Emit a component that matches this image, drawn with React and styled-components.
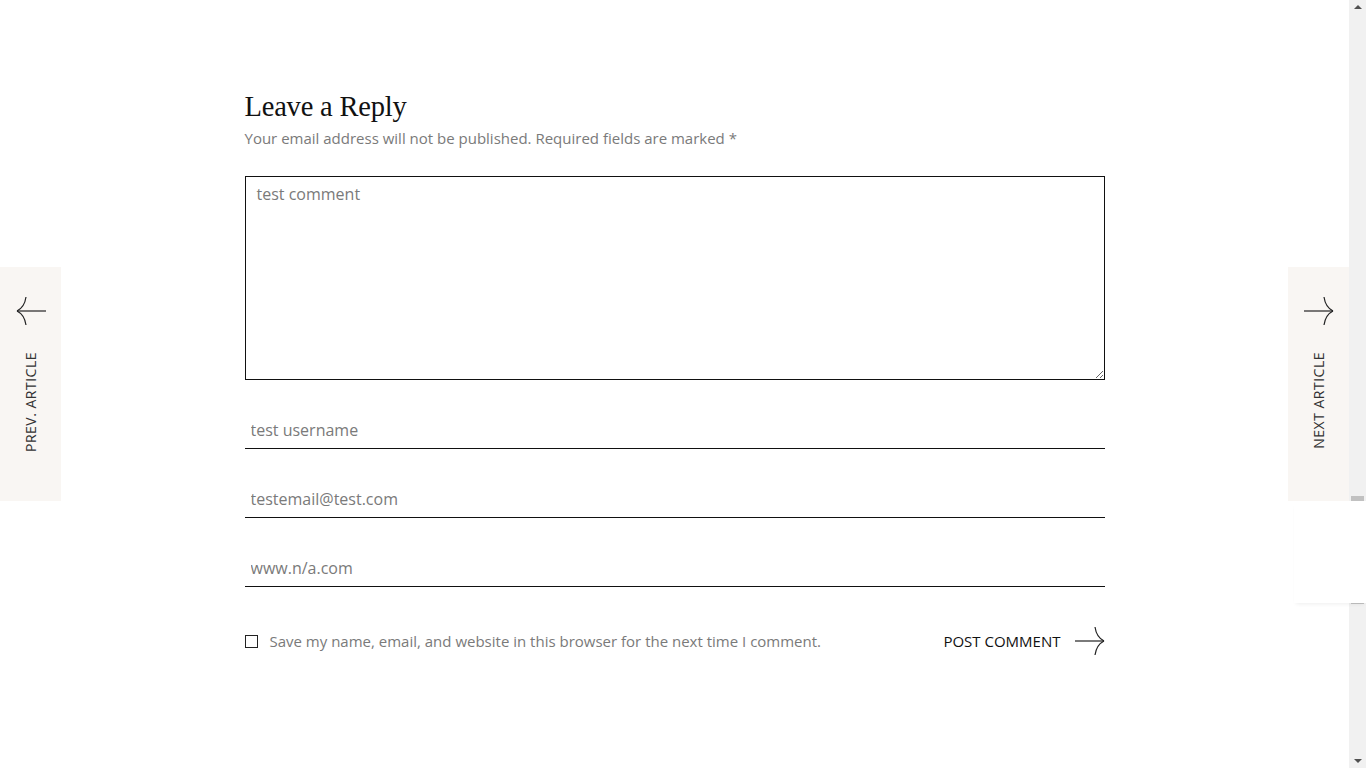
import React from "react"
import styled, { createGlobalStyle } from "styled-components"

const Global = createGlobalStyle`
  html, body { margin: 0; padding: 0; height: 100%; overflow: hidden; background: #fff; }
  #root { height: 100%; }
  * { box-sizing: border-box; }
`

const Shell = styled.div`
  display: flex;
  height: 768px;
  font-family: "Open Sans", "Liberation Sans", sans-serif;
`

const Page = styled.main`
  flex: 1;
  display: flex;
  justify-content: center;
  padding-top: 88px;
`

const Form = styled.form`
  width: 860px;
  display: flex;
  flex-direction: column;
`

const Heading = styled.h3`
  margin: 0;
  font-family: "Liberation Serif", "DejaVu Serif", serif;
  font-weight: 400;
  font-size: 28.5px;
  line-height: 38px;
  color: #111;
  letter-spacing: -0.2px;
`

const Notice = styled.p`
  margin: 0 0 26px;
  font-size: 15px;
  line-height: 24px;
  color: #7a7a7a;
`

const Comment = styled.textarea`
  width: 860px;
  height: 204px;
  border: 1px solid #111;
  padding: 5px 11px;
  font-family: inherit;
  font-size: 16px;
  line-height: 24px;
  color: #333;
  resize: vertical;
  outline: none;
  &::placeholder { color: #7a7a7a; }
`

const Field = styled.input`
  margin-top: 29px;
  height: 40px;
  border: 0;
  border-bottom: 1px solid #111;
  padding: 3px 6px 0;
  font-family: inherit;
  font-size: 16px;
  color: #333;
  outline: none;
  &::placeholder { color: #7a7a7a; }
`

const Footer = styled.div`
  margin-top: 39px;
  display: flex;
  align-items: center;
  justify-content: space-between;
`

const Consent = styled.label`
  display: flex;
  align-items: center;
  gap: 12px;
  font-size: 15px;
  color: #7a7a7a;
`

const Box = styled.span`
  width: 13px;
  height: 13px;
  border: 1.5px solid #222;
  display: inline-block;
`

const Submit = styled.button`
  display: flex;
  align-items: center;
  gap: 14px;
  border: 0;
  background: none;
  padding: 0;
  font-family: inherit;
  font-size: 15px;
  text-transform: uppercase;
  color: #111;
  cursor: pointer;
`

const SideNav = styled.a`
  position: fixed;
  top: 267px;
  ${p => (p.$side === "left" ? "left: 0;" : "right: 17px;")}
  width: 61px;
  height: 234px;
  background: #f9f6f3;
  display: flex;
  flex-direction: column;
  align-items: center;
  padding-top: 29px;
  gap: 26px;
  color: #333;
  text-decoration: none;
`

const SideLabel = styled.span`
  writing-mode: vertical-rl;
  transform: rotate(180deg);
  font-size: 14px;
  text-transform: uppercase;
  color: #333;
  letter-spacing: 0.5px;
`

const Corner = styled.div`
  position: fixed;
  right: 0;
  top: 501px;
  width: 72px;
  height: 102px;
  background: #fff;
  box-shadow: 0 3px 4px -2px rgba(0, 0, 0, 0.07);
`

const Track = styled.div`
  width: 17px;
  background: #f1f1f1;
  display: flex;
  flex-direction: column;
  align-items: center;
  justify-content: space-between;
  padding: 5px 0;
`

const Thumb = styled.div`
  position: fixed;
  right: 2px;
  top: 496px;
  width: 13px;
  height: 108px;
  background: #c1c1c1;
`

const Tri = styled.span`
  width: 0;
  height: 0;
  border-left: 4px solid transparent;
  border-right: 4px solid transparent;
  ${p => (p.$down ? "border-top: 4px solid #505050;" : "border-bottom: 4px solid #505050;")}
`

const Arrow = ({ dir = "right", size = 30 }) => (
  <svg width={size} height={size} viewBox="0 0 30 30" fill="none" stroke="#222" strokeWidth="1.2"
    style={dir === "left" ? { transform: "scaleX(-1)" } : undefined}>
    <path d="M0 15 H29" />
    <path d="M29 15 C 24 12.5, 21 8, 20 1" />
    <path d="M29 15 C 24 17.5, 21 22, 20 29" />
  </svg>
)

export default function App() {
  return (
    <Shell>
      <Global />
      <Page>
        <Form onSubmit={e => e.preventDefault()}>
          <Heading>Leave a Reply</Heading>
          <Notice>Your email address will not be published. Required fields are marked *</Notice>
          <Comment placeholder="test comment" />
          <Field placeholder="test username" />
          <Field placeholder="testemail@test.com" />
          <Field placeholder="www.n/a.com" />
          <Footer>
            <Consent>
              <Box />
              Save my name, email, and website in this browser for the next time I comment.
            </Consent>
            <Submit type="submit">
              Post Comment
              <Arrow />
            </Submit>
          </Footer>
        </Form>
      </Page>
      <SideNav $side="left" href="#">
        <Arrow dir="left" />
        <SideLabel>Prev. Article</SideLabel>
      </SideNav>
      <SideNav $side="right" href="#">
        <Arrow />
        <SideLabel>Next Article</SideLabel>
      </SideNav>
      <Track>
        <Tri />
        <Tri $down />
      </Track>
      <Thumb />
      <Corner />
    </Shell>
  )
}
